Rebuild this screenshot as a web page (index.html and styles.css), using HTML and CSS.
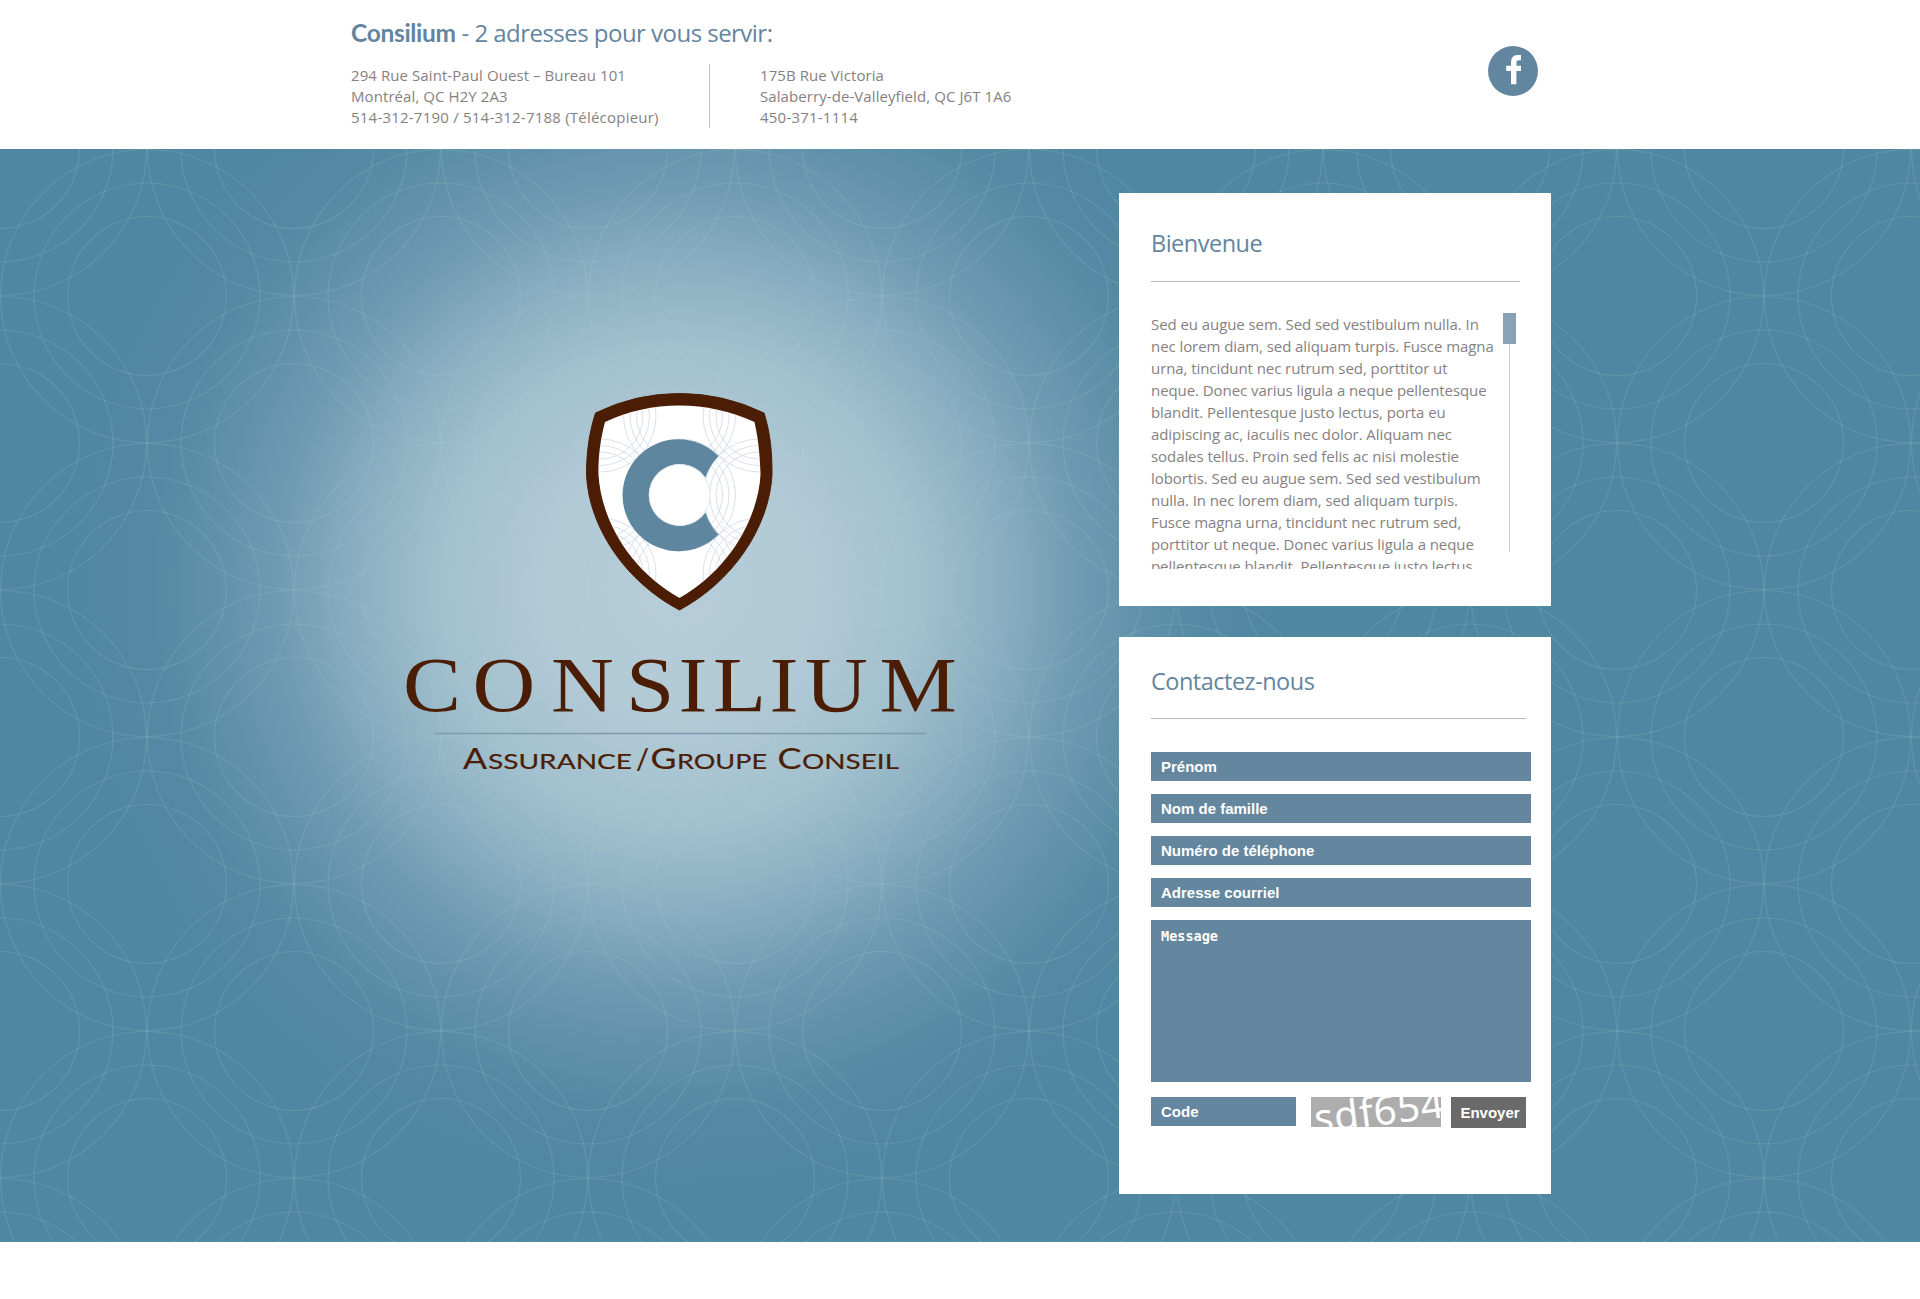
FILE: index.html
```html
<!DOCTYPE html>
<html lang="fr">
<head>
<meta charset="utf-8">
<title>Consilium - Assurance/Groupe Conseil</title>
<link rel="stylesheet" href="styles.css">
</head>
<body>
<header class="top">
  <div class="wrap top-row">
    <div>
      <h1 class="title"><b>Consilium</b> - 2 adresses pour vous servir:</h1>
      <div class="addresses">
        <p class="address">294 Rue Saint-Paul Ouest – Bureau 101<br>Montréal, QC H2Y 2A3<br><span class="phones">514-312-7190 / 514-312-7188 (Télécopieur)</span></p>
        <p class="address address-second">175B Rue Victoria<br>Salaberry-de-Valleyfield, QC J6T 1A6<br><span class="phones">450-371-1114</span></p>
      </div>
    </div>
    <a class="facebook" href="#" aria-label="Facebook">
      <svg width="50" height="50" viewBox="0 0 50 50"><circle cx="25" cy="25" r="25" fill="#6386a0"/><path fill="#fff" d="M23 38.300V25h-4.800v-5.200H23v-3.300c0-5 2.600-7.500 7-7.500h3v5.200h-2.200c-1.800 0-2.400 1-2.400 2.600v3H33V25h-4.600v13.300z"/></svg>
    </a>
  </div>
</header>

<main class="hero">
  <svg class="hero-pattern" width="100%" height="100%" aria-hidden="true">
    <defs>
      <pattern id="rings" width="294" height="294" patternUnits="userSpaceOnUse">
        <g id="ring-set" fill="none" stroke="#a5d3cd" stroke-opacity=".17" stroke-width="1.2">
          <g id="ring"><circle cx="147" cy="147" r="79.5"/><circle cx="147" cy="147" r="113"/><circle cx="147" cy="147" r="146.5"/></g>
          <use href="#ring" x="-147" y="-147"/><use href="#ring" x="147" y="-147"/><use href="#ring" x="-147" y="147"/><use href="#ring" x="147" y="147"/>
        </g>
      </pattern>
    </defs>
    <rect width="100%" height="100%" fill="url(#rings)"/>
  </svg>
  <div class="wrap hero-row">
    <div class="brand">
      <svg width="580" height="430" viewBox="0 0 580 430" role="img" aria-label="Consilium">
        <defs>
          <clipPath id="shield-inside"><path d="M45 52Q80 35.500 119.500 35.500Q158 35.500 194.500 52C199 72 200 90 200.500 105C198 148 170 199 119.500 228C68 199 41 148 38.500 105C38 90 40 70 45 52Z"/></clipPath>
          <g id="crest" fill="none" stroke="#d2d7e4" stroke-width=".8"><circle r="43"/><circle r="49.500"/><circle r="56"/></g>
        </defs>
        <g transform="translate(170 10)">
          <path fill="#4b1d04" stroke="#4b1d04" stroke-linejoin="round" d="M35.500 43Q75 23.500 119.500 23.500Q164 23.500 204 43C211 65 212 85 212 105C209 158 172 212 119.500 240C66 212 29 158 26.500 105C26.500 80 29.500 62 35.500 43Z"/>
          <g clip-path="url(#shield-inside)">
            <rect width="240" height="260" fill="#fff"/>
            <use href="#crest" x="40" y="46"/><use href="#crest" x="119.500" y="46"/><use href="#crest" x="199" y="46"/>
            <use href="#crest" x="40" y="125"/><use href="#crest" x="199" y="125"/>
            <use href="#crest" x="40" y="204"/><use href="#crest" x="119.500" y="204"/><use href="#crest" x="199" y="204"/>
            <use href="#crest" x="119.500" y="125"/>
            <path fill="#5f869f" d="M158.500 86A56 56 0 1 0 158.500 164.500A56 56 0 0 1 145.500 142.500A31 31 0 1 1 145.500 107.500A56 56 0 0 1 158.500 86Z"/>
            <circle cx="119.500" cy="125" r="30.500" fill="#fff" stroke="#d2d7e4" stroke-width=".6"/>
          </g>
        </g>
        <g fill="#4b1d04">
          <text class="brand-name" transform="scale(1.1 1)" x="11.800 75 146.400 214.500 262.300 293.600 345 377.300 445" y="351">CONSILIUM</text>
          <path d="M45 373.500H536" stroke="#7f9aab" stroke-width="1.500"/>
          <g class="brand-tag">
            <text class="cap" x="73" y="409" textLength="24" lengthAdjust="spacingAndGlyphs">A</text>
            <text x="98" y="409" textLength="144" lengthAdjust="spacingAndGlyphs">SSURANCE</text>
            <text class="cap" x="246" y="409" textLength="13" lengthAdjust="spacingAndGlyphs">/</text>
            <text class="cap" x="260.500" y="409" textLength="26" lengthAdjust="spacingAndGlyphs">G</text>
            <text x="287" y="409" textLength="90" lengthAdjust="spacingAndGlyphs">ROUPE</text>
            <text class="cap" x="387.500" y="409" textLength="24" lengthAdjust="spacingAndGlyphs">C</text>
            <text x="412" y="409" textLength="97" lengthAdjust="spacingAndGlyphs">ONSEIL</text>
          </g>
        </g>
      </svg>
    </div>
    <div class="side">
      <section class="card welcome">
        <h2 class="heading">Bienvenue</h2>
        <div class="scroll">
          <p class="copy">Sed eu augue sem. Sed sed vestibulum nulla. In<br>nec lorem diam, sed aliquam turpis. Fusce magna<br>urna, tincidunt nec rutrum sed, porttitor ut<br>neque. Donec varius ligula a neque pellentesque<br>blandit. Pellentesque justo lectus, porta eu<br>adipiscing ac, iaculis nec dolor. Aliquam nec<br>sodales tellus. Proin sed felis ac nisi molestie<br>lobortis. Sed eu augue sem. Sed sed vestibulum<br>nulla. In nec lorem diam, sed aliquam turpis.<br>Fusce magna urna, tincidunt nec rutrum sed,<br>porttitor ut neque. Donec varius ligula a neque<br>pellentesque blandit. Pellentesque justo lectus,</p>
          <div class="track"><div class="thumb"></div></div>
        </div>
      </section>
      <section class="card contact">
        <h2 class="heading">Contactez-nous</h2>
        <form class="form">
          <input class="field" placeholder="Prénom">
          <input class="field" placeholder="Nom de famille">
          <input class="field" placeholder="Numéro de téléphone">
          <input class="field" placeholder="Adresse courriel">
          <textarea class="field message" placeholder="Message"></textarea>
          <div class="send-row">
            <input class="field code" placeholder="Code">
            <svg class="captcha" width="130" height="30" viewBox="0 0 130 30"><rect width="130" height="30" fill="#adadad"/><g transform="rotate(-7 5 36)"><text x="5" y="36" textLength="130" lengthAdjust="spacing">sdf654</text></g></svg>
            <button class="send" type="button">Envoyer</button>
          </div>
        </form>
      </section>
    </div>
  </div>
</main>
</body>
</html>
```
FILE: styles.css
```css
* { box-sizing: border-box; }

body {
  margin: 0;
  background: #fff;
  color: #868181;
  font-family: "Open Sans", "Noto Sans", sans-serif;
}

h1, h2, p { margin: 0; font-weight: 400; }

.wrap { width: 1200px; margin-left: 351px; }

.top { height: 149px; padding-top: 16px; }
.top-row { display: flex; justify-content: space-between; }

.title {
  color: #63859f;
  font-size: 24px;
  line-height: 34px;
  letter-spacing: -.53px;
  white-space: nowrap;
}
.title b { font: 700 24.5px/34px "Lato", sans-serif; letter-spacing: -.3px; }

.addresses { display: flex; margin-top: 14px; }
.address {
  width: 359px;
  height: 64px;
  padding-top: 1px;
  border-right: 1px solid #c4c4c4;
  font-size: 15px;
  line-height: 21px;
  letter-spacing: .08px;
  white-space: nowrap;
}
.address-second { border: 0; padding-left: 50px; }
.phones { letter-spacing: .22px; }

.facebook { width: 50px; height: 50px; margin: 30px 13px 0 0; }
.facebook svg { display: block; }

.hero {
  position: relative;
  height: 1093px;
  background: radial-gradient(circle at 679px 438px, #b6cdd9 0, #b2cad6 130px, #a2c0ce 240px, #8aaec1 325px, #6f9bb2 400px, #6192aa 460px, #5389a3 530px, #4f86a1 610px);
}
.hero-pattern { position: absolute; inset: 0; }
.hero-row { position: relative; display: flex; justify-content: space-between; padding-top: 44px; }

.brand { padding: 167px 0 0 39px; }
.brand svg { display: block; }
.brand-name { font: 79px "Liberation Serif", serif; }
.brand-tag { font: 22px "Lato", sans-serif; stroke: #4b1d04; stroke-width: .2px; }
.brand-tag .cap { font-size: 28.5px; }

.side { width: 432px; }
.card { background: #fff; padding: 0 25px 0 32px; }
.welcome { height: 413px; margin-bottom: 31px; padding-top: 33px; }
.contact { height: 557px; padding-top: 27px; }

.heading {
  height: 56px;
  border-bottom: 1px solid #b3bac0;
  color: #63859f;
  font-size: 23.5px;
  line-height: 34px;
  letter-spacing: -.5px;
}
.welcome .heading { margin-right: 6px; }

.scroll { display: flex; justify-content: space-between; height: 256px; margin-top: 31px; overflow: hidden; }
.copy { font-size: 15px; line-height: 22px; letter-spacing: -.07px; white-space: nowrap; }
.track {
  flex: none;
  width: 13px;
  height: 239px;
  margin-right: 10px;
  background: linear-gradient(#ccc, #ccc) 6px 0 / 1px 100% no-repeat;
}
.thumb { height: 31px; background: #88a3b7; }

.form { display: flex; flex-direction: column; gap: 13px; margin-top: 33px; }
.contact .heading { height: 55px; }

.field {
  display: block;
  width: 380px;
  height: 29px;
  padding: 0 10px;
  border: 0;
  background: #64869e;
  color: #fff;
  font: bold 15px "Liberation Sans", sans-serif;
}
.field::placeholder { color: #fff; opacity: 1; }
.message { height: 162px; padding-top: 8px; resize: none; font: bold 13.5px "DejaVu Sans Mono", monospace; }

.send-row { display: flex; align-items: flex-start; margin-top: 2px; }
.code { width: 145px; }
.captcha { display: block; margin-left: 15px; }
.captcha text { font: 40px "Noto Sans", sans-serif; fill: #fff; }
.send {
  width: 75px;
  height: 31px;
  margin-left: 10px;
  padding: 0 0 0 3px;
  border: 0;
  background: #6b6a6a;
  color: #fff;
  font: bold 15px "Liberation Sans", sans-serif;
}
```
